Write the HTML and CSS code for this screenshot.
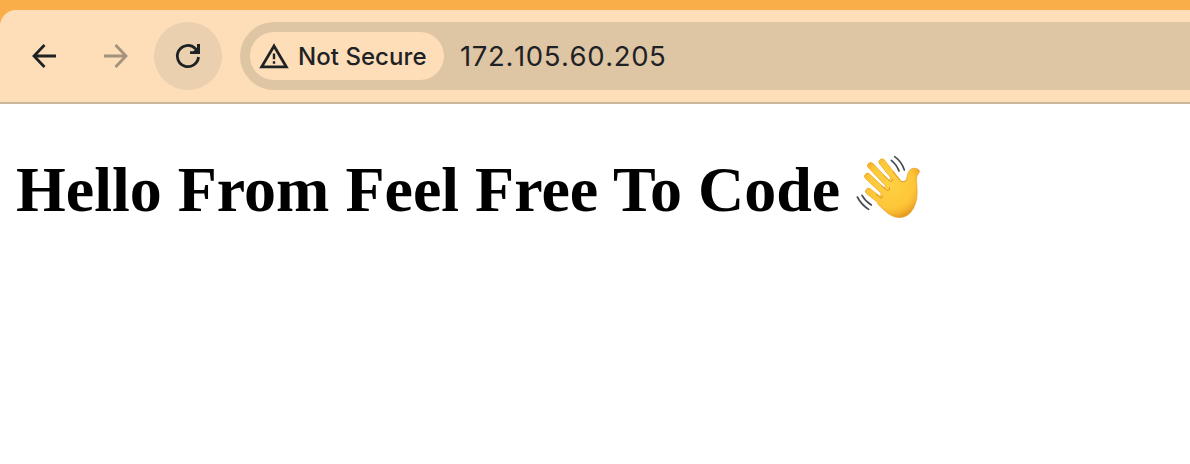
FILE: index.html
```
<!DOCTYPE html>
<html lang="en">
<head>
<meta charset="utf-8">
<title>Hello</title>
<link rel="stylesheet" href="styles.css">
</head>
<body>
<div class="window">
  <header class="toolbar">
    <button class="nav" aria-label="Back"><svg width="28" height="28" viewBox="0 0 28 28"><path d="M26 14H4.5M14.5 3L4 14L14.5 25"/></svg></button>
    <button class="nav forward" aria-label="Forward"><svg width="28" height="28" viewBox="0 0 28 28"><path d="M2 14H23.5M13.5 3L24 14L13.5 25"/></svg></button>
    <button class="nav reload" aria-label="Reload"><svg width="28" height="28" viewBox="0 0 28 28"><path d="M24.5 15A10.6 10.6 0 1 1 21.3 6.4L23.5 9"/><path class="solid" d="M23 2H26V12H16V9.2H19.2L23 6Z"/></svg></button>
    <div class="address">
      <div class="chip"><svg width="30" height="26" viewBox="0 0 30 26"><path d="M15 3L27.3 23.8H2.7Z"/><path class="mark" d="M15 10.5V16.2M15 18.3V20.7"/></svg><span>Not Secure</span></div>
      <span class="url">172.105.60.205</span>
    </div>
  </header>
  <main>
    <h1>Hello From Feel Free To Code</h1>
    <svg class="wave" width="85" height="85" viewBox="0 0 255 255" role="img" aria-label="Waving hand">
      <defs>
        <radialGradient id="skin" gradientUnits="userSpaceOnUse" cx="137" cy="119" r="100">
          <stop offset="0" stop-color="#ffd143"/><stop offset=".7" stop-color="#fdc638"/><stop offset=".88" stop-color="#f5b22d"/><stop offset="1" stop-color="#e69a20"/>
        </radialGradient>
      </defs>
      <g class="edge">
        <path d="M111 51L158 110M77 62L139 127M68 94L125 148M71 139L118 176"/>
      </g>
      <path fill="url(#skin)" stroke="#e5a02c" stroke-width="2" d="M140 94L165 106C172 114 182 111 184 104C188 91 187 82 196 74C204 67 219 69 223 77C225 83 217 87 215 98C213 112 218 132 216 152C214 176 203 202 185 212C165 222 145 218 126 203L98 177L110 142Z"/>
      <g class="fingers" stroke="url(#skin)">
        <path d="M111 51L158 110M77 62L139 127M68 94L125 148M71 139L118 176"/>
      </g>
      <path class="shade" d="M94 149L107 159Q113 160 113 153M109 122L127 137Q136 137 134 128M118 92L136 110Q145 109 142 102M145 82L165 106Q176 115 184 105"/>
      <path class="motion" d="M149 35Q170 50 178 75M139 46Q155 59 162 78M51 151Q61 169 79 180M37 156Q49 179 71 193"/>
    </svg>
  </main>
</div>
</body>
</html>
```
FILE: styles.css
```
* { box-sizing: border-box; }
body { margin: 0; background: #fff; }
.window { height: 464px; padding-top: 10px; overflow: hidden; background: linear-gradient(#f9ae49 0 50px, #fff 50px); }
.toolbar { display: flex; align-items: center; height: 94px; padding-left: 10px; background: #fddeb8; border-bottom: 2px solid #c9b69b; border-radius: 16px 0 0; }
.nav { display: flex; align-items: center; justify-content: center; width: 68px; height: 68px; margin: 0 4px 0 0; padding: 0; border: 0; border-radius: 50%; background: none; }
.nav svg, .chip svg { fill: none; stroke: #1f2225; stroke-width: 2.8; }
.forward svg { opacity: .4; }
.reload { margin-right: 18px; background: #ead0ae; }
.nav .solid { fill: #1f2225; stroke: none; }
.address { display: flex; align-items: center; flex: 1; height: 68px; padding-left: 10px; border-radius: 34px 0 0 34px; background: #dec6a4; color: #1f2225; font-family: Inter, sans-serif; }
.chip { display: flex; align-items: center; gap: 9px; width: 194px; height: 48px; padding-left: 9px; border-radius: 24px; background: #fddeb8; font-size: 24px; font-weight: 500; letter-spacing: .05px; white-space: nowrap; }
.chip .mark { stroke-width: 2.4; }
.url { margin-left: 16px; font-size: 27.5px; letter-spacing: .62px; font-kerning: none; }
main { display: flex; align-items: flex-start; padding: 41px 0 0 16px; }
h1 { margin: 8px 0 0; font: bold 64px/74px "Liberation Serif", serif; white-space: nowrap; }
.wave { margin-left: 5px; }
.edge, .fingers { fill: none; stroke-width: 18; stroke-linecap: round; }
.edge { stroke: #e5a02c; stroke-width: 20; }
.shade { fill: none; stroke: #d98d1b; stroke-width: 2.5; stroke-linecap: round; }
.motion { fill: none; stroke: #464b50; stroke-width: 5; stroke-linecap: round; }
```
